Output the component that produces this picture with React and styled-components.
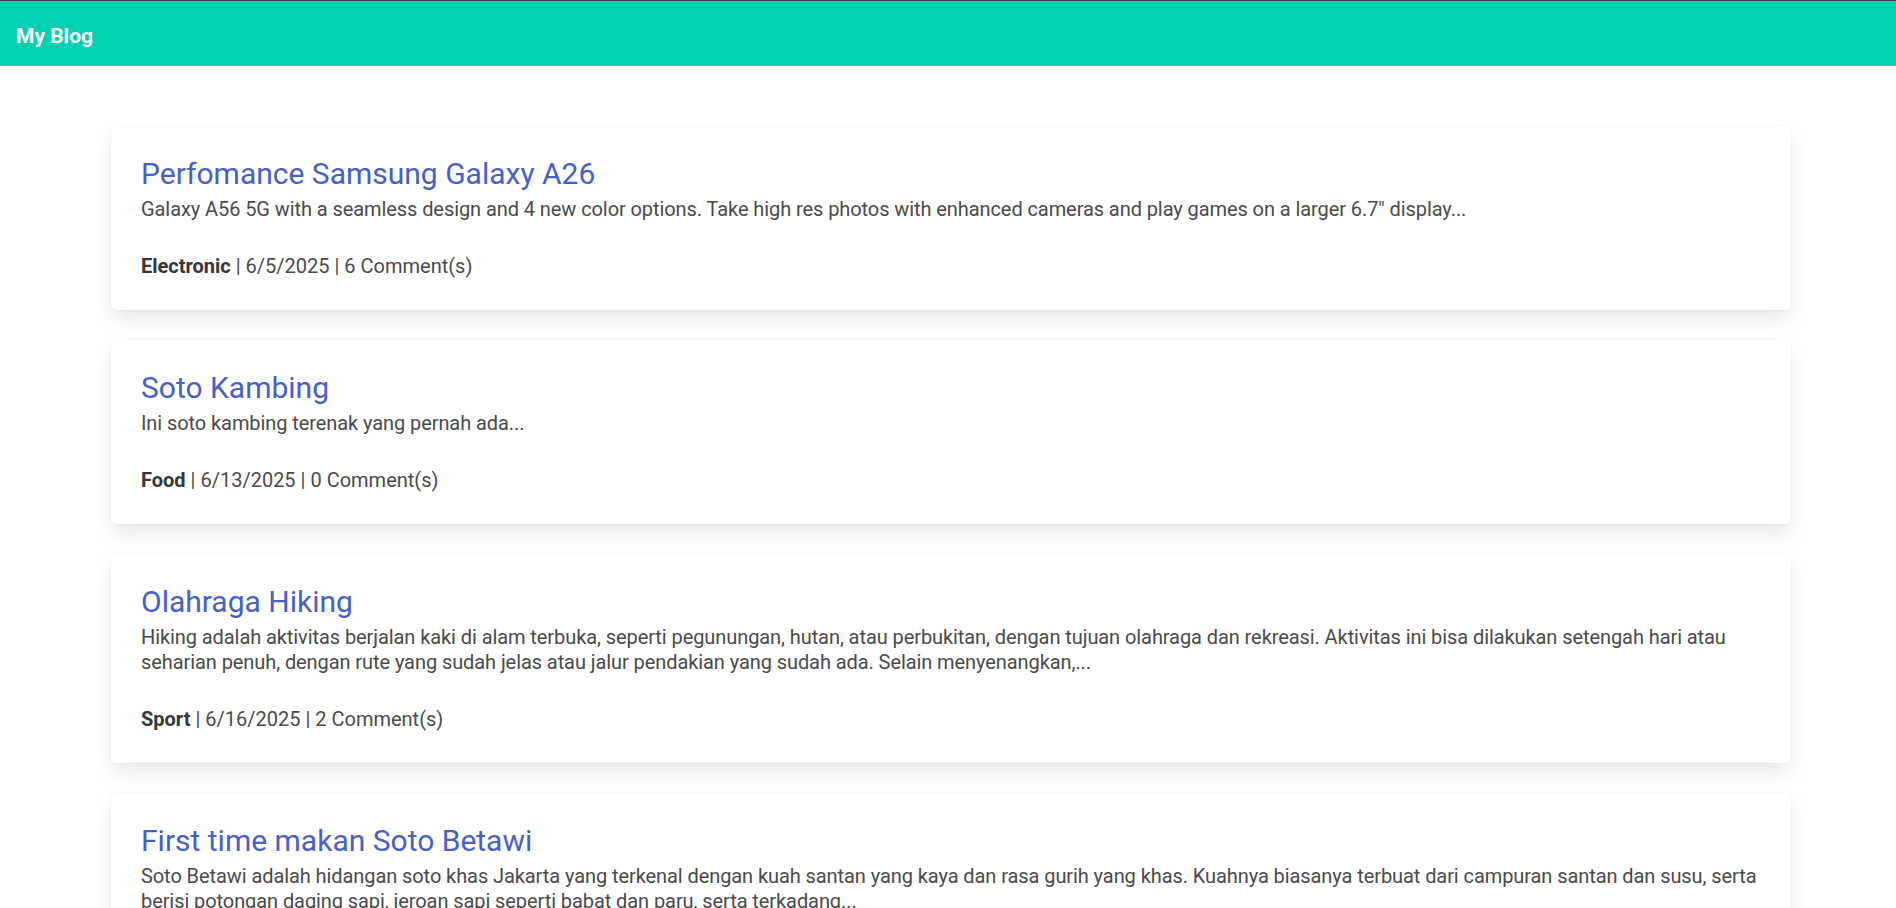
import React from "react";
import styled, { createGlobalStyle } from "styled-components";

const GlobalStyle = createGlobalStyle`
  html, body {
    margin: 0;
    padding: 0;
    background: #ffffff;
  }
  body {
    font-family: Roboto, "Liberation Sans", sans-serif;
    color: #4a4a4a;
    -webkit-font-smoothing: antialiased;
  }
  * { box-sizing: border-box; }
`;

const Navbar = styled.nav`
  height: 66px;
  background: #00d1b2;
  border-top: 1px solid #3b3f44;
  display: flex;
  align-items: flex-start;
`;

const Brand = styled.a`
  display: block;
  padding: 23px 15px 0 16px;
  font-size: 21px;
  line-height: 24px;
  font-weight: 700;
  color: #ffffff;
  text-decoration: none;
`;

const Section = styled.main`
  padding: 60px 0 60px 111px;
`;

const Container = styled.div`
  width: 1680px;
  display: flex;
  flex-direction: column;
  gap: 30px;
`;

const Card = styled.article`
  background: #ffffff;
  border-radius: 5px;
  box-shadow: 0 10px 20px -2.5px rgba(10, 10, 10, 0.1),
    0 0 0 1px rgba(10, 10, 10, 0.02);
  padding: 30px;
`;

const Title = styled.h2`
  margin: 0;
  font-size: 30px;
  line-height: 36px;
  font-weight: 400;
  color: #485fc7;
`;

const Excerpt = styled.p`
  margin: 5px 0 0;
  font-size: 20px;
  line-height: 25px;
  letter-spacing: -0.08px;
  color: #4a4a4a;
`;

const Meta = styled.p`
  margin: 30px 0 0;
  font-size: 20px;
  line-height: 28px;
  color: #4a4a4a;
`;

const Category = styled.strong`
  font-weight: 700;
  color: #363636;
`;

const posts = [
  {
    title: "Perfomance Samsung Galaxy A26",
    excerpt:
      'Galaxy A56 5G with a seamless design and 4 new color options. Take high res photos with enhanced cameras and play games on a larger 6.7" display...',
    category: "Electronic",
    date: "6/5/2025",
    comments: 6,
  },
  {
    title: "Soto Kambing",
    excerpt: "Ini soto kambing terenak yang pernah ada...",
    category: "Food",
    date: "6/13/2025",
    comments: 0,
  },
  {
    title: "Olahraga Hiking",
    excerpt:
      "Hiking adalah aktivitas berjalan kaki di alam terbuka, seperti pegunungan, hutan, atau perbukitan, dengan tujuan olahraga dan rekreasi. Aktivitas ini bisa dilakukan setengah hari atau seharian penuh, dengan rute yang sudah jelas atau jalur pendakian yang sudah ada. Selain menyenangkan,...",
    category: "Sport",
    date: "6/16/2025",
    comments: 2,
  },
  {
    title: "First time makan Soto Betawi",
    excerpt:
      "Soto Betawi adalah hidangan soto khas Jakarta yang terkenal dengan kuah santan yang kaya dan rasa gurih yang khas. Kuahnya biasanya terbuat dari campuran santan dan susu, serta berisi potongan daging sapi, jeroan sapi seperti babat dan paru, serta terkadang...",
    category: "Food",
    date: "6/17/2025",
    comments: 1,
  },
];

export default function App() {
  return (
    <>
      <GlobalStyle />
      <Navbar>
        <Brand href="#">My Blog</Brand>
      </Navbar>
      <Section>
        <Container>
          {posts.map((p) => (
            <Card key={p.title}>
              <Title>{p.title}</Title>
              <Excerpt>{p.excerpt}</Excerpt>
              <Meta>
                <Category>{p.category}</Category> | {p.date} | {p.comments} Comment(s)
              </Meta>
            </Card>
          ))}
        </Container>
      </Section>
    </>
  );
}
